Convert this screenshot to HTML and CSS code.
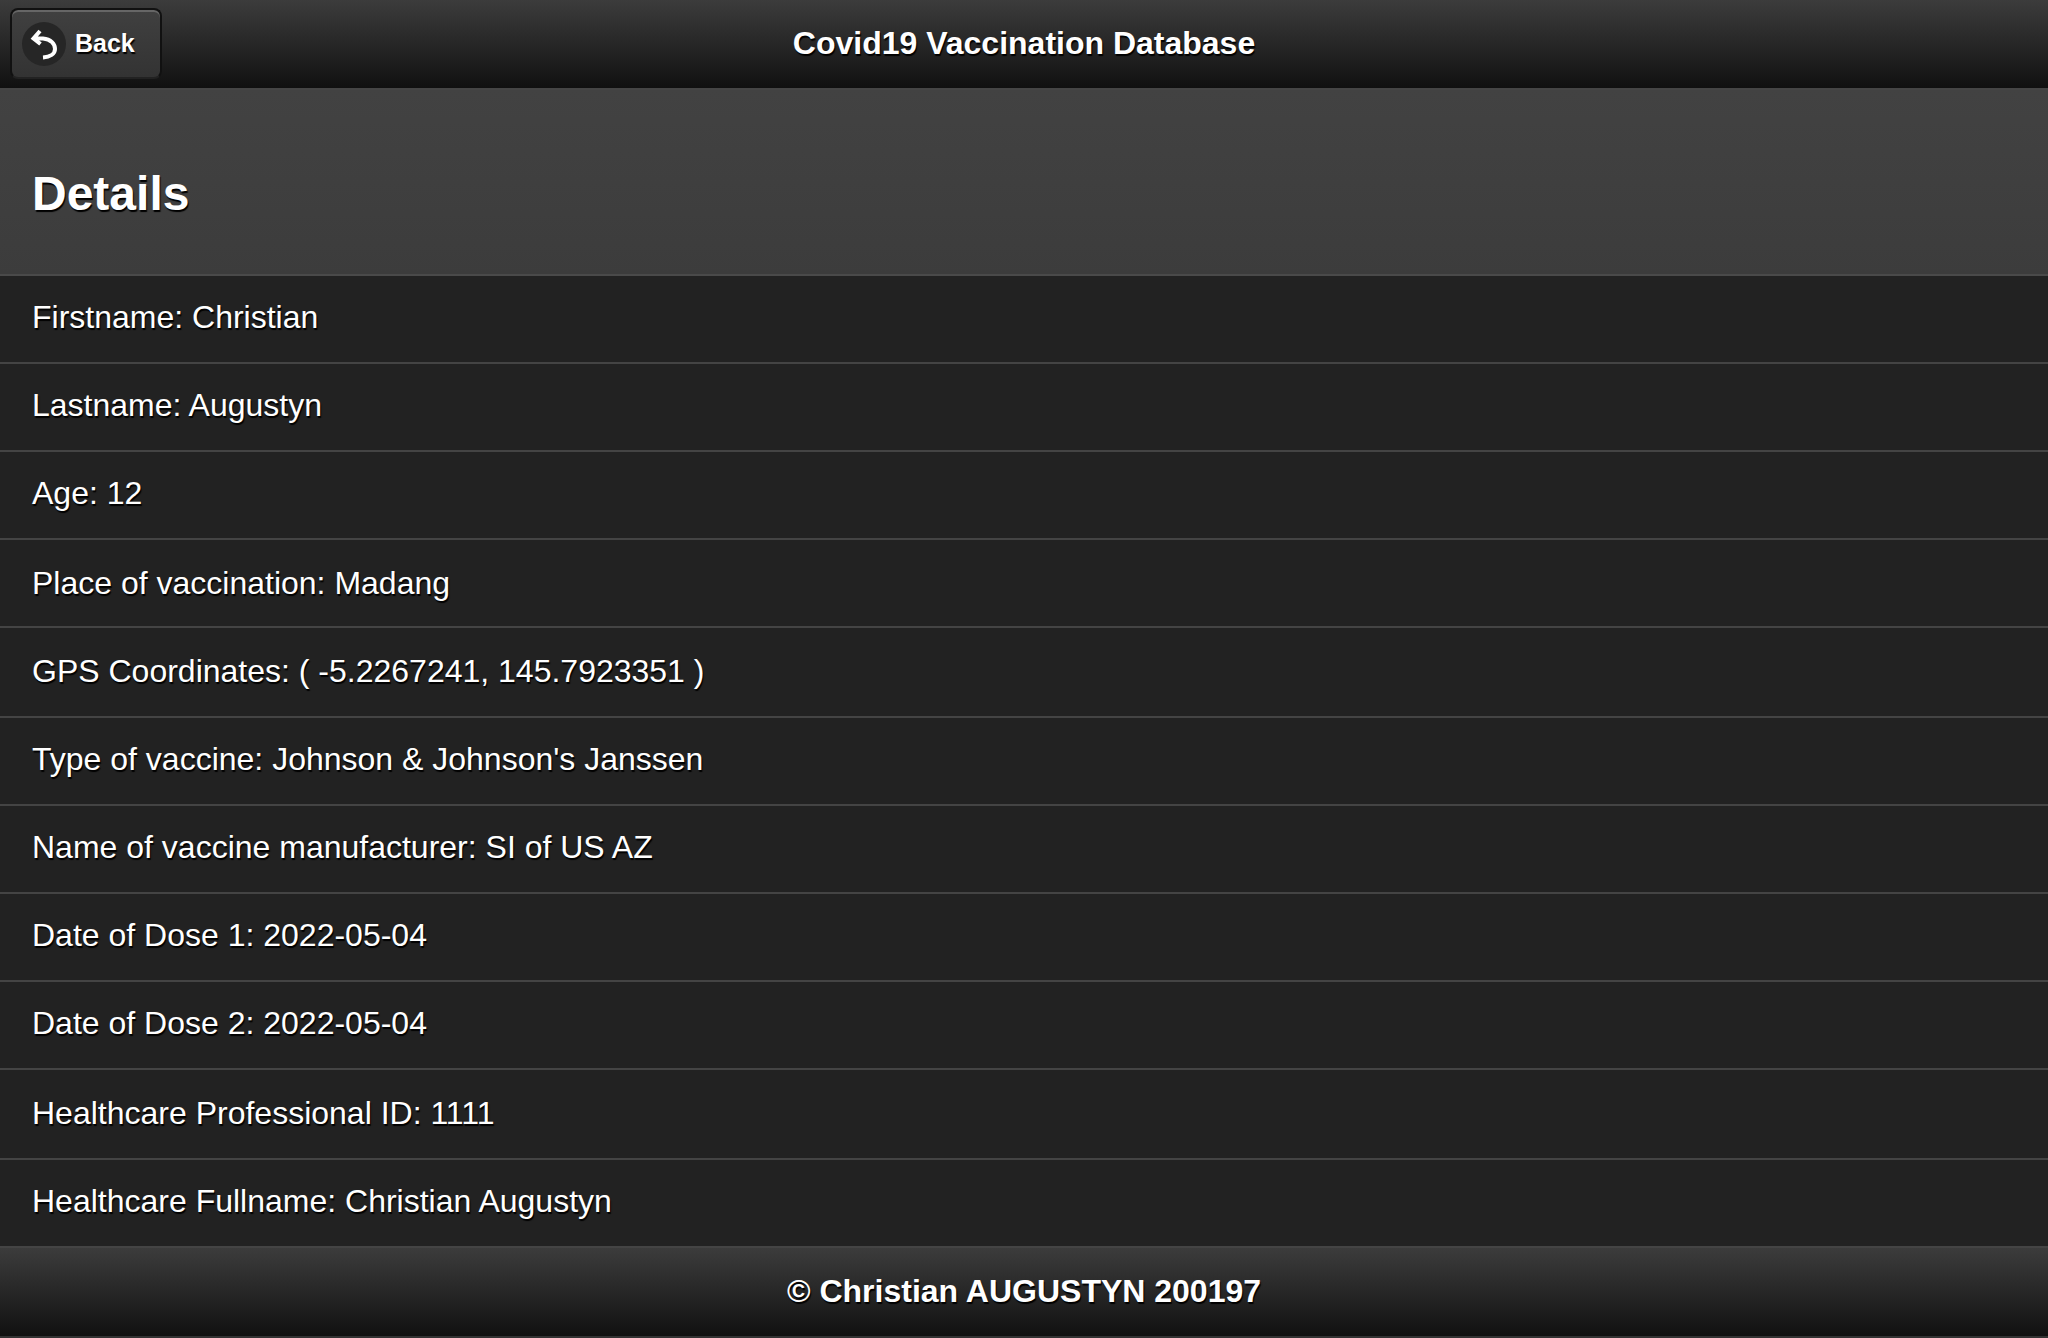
FILE: index.html
```html
<!DOCTYPE html>
<html lang="en">
<head>
<meta charset="utf-8">
<title>Covid19 Vaccination Database</title>
<link rel="stylesheet" href="styles.css">
</head>
<body>
<div class="page">
  <header class="bar header">
    <a class="back" href="#">
      <span class="back-icon">
        <svg viewBox="0 0 44 44" width="44" height="44"><path class="arrow" d="M18 9 L11.5 16.5 L18.5 22 M13 16.5 H21 C29 17 33 22 33 27 C33 32 28 35 21 35.5"/></svg>
      </span>
      <span>Back</span>
    </a>
    <h1 class="title">Covid19 Vaccination Database</h1>
  </header>
  <div class="divider-head"><h2>Details</h2></div>
  <ul class="list">
    <li>Firstname: Christian</li>
    <li>Lastname: Augustyn</li>
    <li>Age: 12</li>
    <li class="down">Place of vaccination: Madang</li>
    <li class="tall">GPS Coordinates: ( -5.2267241, 145.7923351 )</li>
    <li>Type of vaccine: Johnson &amp; Johnson's Janssen</li>
    <li>Name of vaccine manufacturer: SI of US AZ</li>
    <li>Date of Dose 1: 2022-05-04</li>
    <li>Date of Dose 2: 2022-05-04</li>
    <li class="tall">Healthcare Professional ID: 1111</li>
    <li>Healthcare Fullname: Christian Augustyn</li>
  </ul>
  <footer class="bar footer">© Christian AUGUSTYN 200197</footer>
</div>
</body>
</html>
```
FILE: styles.css
```css
* { box-sizing: border-box; }
html, body { margin: 0; padding: 0; height: 100%; }
body {
  background: #222;
  color: #fff;
  font-family: "Liberation Sans", Arial, sans-serif;
  overflow: hidden;
}
.page { display: flex; flex-direction: column; height: 1338px; }
.bar {
  background: linear-gradient(#3c3c3c, #111);
  font-weight: 700;
  text-shadow: 1px 2px 1px #000;
}
.header {
  height: 88px;
  flex: none;
  display: flex;
  align-items: center;
  justify-content: center;
  position: relative;
  padding-bottom: 3px;
}
.title { margin: 0; font-size: 32px; font-weight: 700; line-height: 40px; }
.back {
  position: absolute;
  left: 10px;
  top: 8px;
  width: 152px;
  height: 71px;
  display: flex;
  align-items: center;
  gap: 9px;
  padding-left: 10px;
  color: #fff;
  font-size: 25px;
  text-decoration: none;
  background: linear-gradient(#404040, #333);
  border: 2px solid #111;
  border-bottom-color: #222;
  border-radius: 8px;
  box-shadow: inset 0 2px 0 #666;
}
.back-icon {
  width: 44px;
  height: 44px;
  border-radius: 50%;
  background: #262626;
  display: flex;
}
.arrow { fill: none; stroke: #fff; stroke-width: 4; }
.divider-head {
  height: 188px;
  flex: none;
  background: linear-gradient(#424242, #3c3c3c);
  border-top: 2px solid #464646;
  border-bottom: 2px solid #4a4a4a;
  padding: 0 32px;
  display: flex;
  align-items: center;
}
.divider-head h2 {
  margin: 24px 0 0;
  font-size: 48px;
  font-weight: 700;
  line-height: 56px;
  text-shadow: 1px 2px 1px #000;
}
.list { list-style: none; margin: 0; padding: 0; flex: none; }
.list li {
  height: 88px;
  padding: 21px 32px 0;
  font-size: 32px;
  line-height: 40px;
  background: #222;
  border-bottom: 2px solid #444;
  text-shadow: 1px 2px 1px #000;
}
.list li.down { padding-top: 23px; }
.list li.tall { height: 90px; padding-top: 23px; }
.footer {
  flex: 1;
  display: flex;
  align-items: center;
  justify-content: center;
  font-size: 32px;
  line-height: 40px;
  padding-bottom: 2px;
  border-bottom: 2px solid #333;
}
```
